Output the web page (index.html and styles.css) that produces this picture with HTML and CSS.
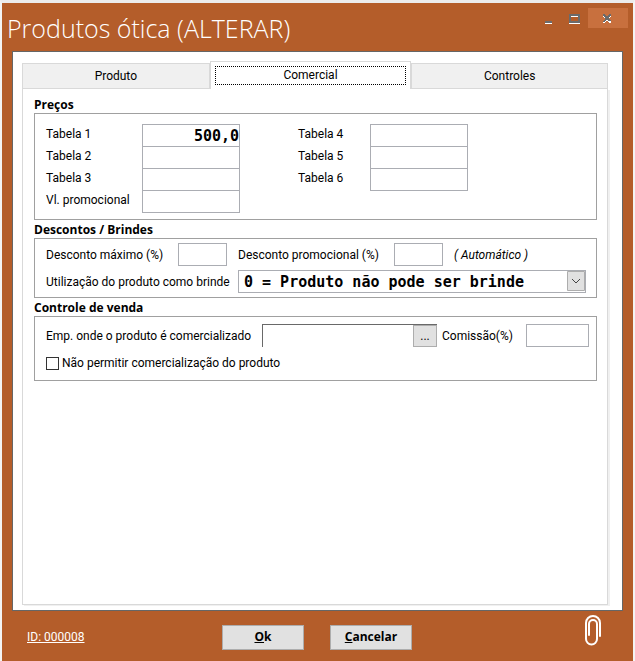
FILE: index.html
```html
<!DOCTYPE html>
<html lang="pt-BR">
<head>
	<meta charset="utf-8">
	<title>Produtos ótica (ALTERAR)</title>
	<meta name="viewport" content="width=device-width, initial-scale=1">
	<link rel="stylesheet" href="styles.css">
</head>
<body>
<form class="window">
	<header class="titlebar">
		<h1>Produtos ótica (ALTERAR)</h1>
		<div class="win_buttons">
			<button type="button" class="win_btn" aria-label="Minimizar">
				<svg width="12" height="12" viewBox="1 -1 12 12" shape-rendering="crispEdges"><path fill="#6b6b6b" d="M3 8h7v2H3z"/><path fill="#fff" d="M3 10h7v1H3z"/></svg>
			</button>
			<button type="button" class="win_btn" aria-label="Maximizar">
				<svg width="12" height="12" viewBox="1 -1 12 12" shape-rendering="crispEdges"><path fill="#6b6b6b" fill-rule="evenodd" d="M1 1h11v9H1zM3 4v4h7V4z"/><path fill="#fff" d="M3 3h7v1H3zM1 10h11v1H1z"/></svg>
			</button>
			<button type="button" class="win_btn win_close" aria-label="Fechar">
				<svg width="12" height="12" viewBox="1 -1 12 12" shape-rendering="crispEdges"><path fill="#fff" d="M2 2h2v1h1v1h2V3h1V2h2v2H9v1H8v2h1v1h1v2H8V9H7V8H5v1H4v1H2V8h1V7h1V5H3V4H2z"/><path fill="#6b6b6b" d="M2 1h2v1h1v1h2V2h1V1h2v2H9v1H8v2h1v1h1v1H8V8H7V7H5v1H4v1H2V8h1V7h1V4H3V3H2z"/></svg>
			</button>
		</div>
	</header>

	<main class="panel">
		<div class="tabs" role="tablist">
			<button type="button" class="tab" role="tab">Produto</button>
			<button type="button" class="tab active" role="tab" aria-selected="true"><span>Comercial</span></button>
			<button type="button" class="tab" role="tab">Controles</button>
		</div>
		<div class="tab_page" role="tabpanel">

			<h2>Preços</h2>
			<section class="group prices">
				<div class="price_col">
					<div class="price_row"><label for="tabela1">Tabela 1</label><input type="text" id="tabela1" class="value" value="500,00"></div>
					<div class="price_row"><label for="tabela2">Tabela 2</label><input type="text" id="tabela2"></div>
					<div class="price_row"><label for="tabela3">Tabela 3</label><input type="text" id="tabela3"></div>
					<div class="price_row"><label for="promocional">Vl. promocional</label><input type="text" id="promocional"></div>
				</div>
				<div class="price_col second">
					<div class="price_row"><label for="tabela4">Tabela 4</label><input type="text" id="tabela4"></div>
					<div class="price_row"><label for="tabela5">Tabela 5</label><input type="text" id="tabela5"></div>
					<div class="price_row"><label for="tabela6">Tabela 6</label><input type="text" id="tabela6"></div>
				</div>
			</section>

			<h2>Descontos / Brindes</h2>
			<section class="group discounts">
				<div class="row">
					<label for="desc_max" class="w_max">Desconto máximo (%)</label>
					<input type="text" id="desc_max" class="percent">
					<label for="desc_promo" class="w_promo">Desconto promocional (%)</label>
					<input type="text" id="desc_promo" class="percent">
					<em>( Automático )</em>
				</div>
				<div class="row">
					<label for="brinde" class="w_gift">Utilização do produto como brinde</label>
					<div class="select_box">
						<select id="brinde">
							<option>0 = Produto não pode ser brinde</option>
						</select>
						<svg class="arrow" width="18" height="20" viewBox="0 0 18 20"><path fill="#e1e1e1" stroke="#adadad" d="M.5.5h17v19H.5z"/><path fill="none" stroke="#444" d="M5 8l4 4 4-4"/></svg>
					</div>
				</div>
			</section>

			<h2>Controle de venda</h2>
			<section class="group sales">
				<div class="row">
					<label for="empresas" class="w_company">Emp. onde o produto é comercializado</label>
					<div class="lookup">
						<input type="text" id="empresas">
						<button type="button" aria-label="Procurar empresas">...</button>
					</div>
					<label for="comissao" class="w_comm">Comissão(%)</label>
					<input type="text" id="comissao" class="commission">
				</div>
				<label class="check"><input type="checkbox">Não permitir comercialização do produto</label>
			</section>
		</div>
	</main>

	<footer class="footer">
		<a href="#" class="record">ID: 000008</a>
		<div class="actions">
			<button type="button"><u>O</u>k</button>
			<button type="button"><u>C</u>ancelar</button>
		</div>
		<button type="button" class="attach" aria-label="Anexos">
			<svg width="18" height="34" viewBox="0 0 18 34"><path fill="none" stroke="#fff" stroke-width="2" stroke-linecap="round" d="M5 21V10a4 4 0 0 1 8 0v15a5 5 0 0 1-11 0V9a7 7 0 0 1 14 0v13"/></svg>
		</button>
	</footer>
</form>
</body>
</html>
```
FILE: styles.css
```css
* {
	box-sizing: border-box;
}

body {
	margin: 0;
	background: #f4f4f4;
	font-family: Roboto, "Open Sans", sans-serif;
	font-size: 12px;
	line-height: 16px;
	color: #000;
}

button, input, select {
	font: inherit;
	color: inherit;
	margin: 0;
	padding: 0;
	border-radius: 0;
}

.window {
	display: flex;
	flex-direction: column;
	min-height: 100vh;
	padding: 0 10px;
	background: #b45d2a;
	border: 2px solid #f4f4f4;
	border-top: 3px solid #ececec;
	border-bottom: 0;
}

/* title bar */
.titlebar {
	display: flex;
	justify-content: space-between;
	height: 48px;
	margin: 0 -5px;
}

.titlebar h1 {
	margin: 0;
	padding-top: 8px;
	font-family: "Open Sans", "Noto Sans", sans-serif;
	font-size: 25px;
	line-height: 34px;
	font-weight: 300;
	color: #fff;
}

.win_buttons {
	display: flex;
	padding-top: 5px;
}

.win_btn {
	width: 26px;
	height: 20px;
	background: none;
	border: 0;
}

.win_btn svg {
	display: block;
	margin: 0 auto;
}

.win_close {
	width: 40px;
	background: #c8703e;
}

/* white area with the tabs */
.panel {
	flex: 1;
	display: flex;
	flex-direction: column;
	padding: 9px 14px 5px 9px;
	background: #fff;
	border: 1px solid #666;
}

.tabs {
	display: grid;
	grid-template-columns: 188fr 202fr 197fr;
	align-items: end;
}

.tab {
	height: 26px;
	background: #f0f0f0;
	border: 1px solid #d9d9d9;
}

.tab.active {
	height: 28px;
	padding: 3px 4px 4px;
	background: #fff;
	border-bottom: 0;
}

.tab.active span {
	display: block;
	line-height: 17px;
	border: 1px dotted #000;
}

.tab_page {
	flex: 1;
	padding: 8px 10px 10px 11px;
	border: 1px solid #d9d9d9;
	border-top: 0;
	box-shadow: 2px 1px 0 #f0f0f0;
}

h2 {
	margin: 0;
	font-family: "Open Sans", "Noto Sans", sans-serif;
	font-size: 12px;
	line-height: 16px;
	font-weight: 700;
}

.group {
	margin-bottom: 2px;
	padding: 0 11px;
	border: 1px solid #a0a0a0;
}

input[type=text] {
	height: 23px;
	background: #fff;
	border: 1px solid #abadb3;
}

/* prices */
.prices {
	display: flex;
	height: 107px;
	padding-top: 10px;
}

.price_row {
	display: flex;
	height: 22px;
}

.price_row label {
	width: 96px;
	line-height: 20px;
}

.second {
	margin-left: 58px;
}

.second label {
	width: 72px;
}

.price_row input {
	width: 98px;
}

.price_row .value {
	padding: 0 0 0 51px;
	font-family: "DejaVu Sans Mono", monospace;
	font-size: 15px;
	font-weight: 700;
}

/* discounts and sales rows */
.row {
	display: flex;
	align-items: center;
	white-space: nowrap;
}

.discounts {
	padding-top: 4px;
	padding-right: 10px;
	padding-bottom: 4px;
}

.discounts .row + .row {
	margin-top: 4px;
}

.w_max {
	width: 132px;
}

.w_promo {
	width: 156px;
	margin-left: 11px;
}

.w_gift {
	width: 192px;
}

.w_company {
	width: 216px;
}

.w_comm {
	width: 84px;
	margin-left: 5px;
}

.percent {
	width: 49px;
}

.discounts em {
	margin-left: 11px;
}

.select_box {
	position: relative;
	flex: 1;
}

.select_box select {
	display: block;
	appearance: none;
	width: 100%;
	height: 23px;
	padding: 0 24px 0 5px;
	background: #fff;
	border: 1px solid #abadb3;
	font-family: "DejaVu Sans Mono", monospace;
	font-size: 15px;
	font-weight: 700;
}

.arrow {
	position: absolute;
	top: 1px;
	right: 1px;
	pointer-events: none;
}

.sales {
	padding: 7px 7px 9px 11px;
}

.lookup {
	display: flex;
	width: 175px;
	height: 23px;
	border-top: 1px solid #696969;
	border-left: 1px solid #696969;
}

.lookup input[type=text] {
	flex: 1;
	min-width: 0;
	height: 22px;
	border: 0;
}

.lookup button {
	width: 24px;
	height: 22px;
	background: #e1e1e1;
	border: 1px solid #adadad;
}

.commission {
	flex: 1;
	min-width: 0;
}

.check {
	display: flex;
	align-items: center;
	margin-top: 8px;
}

.check input {
	appearance: none;
	width: 13px;
	height: 13px;
	margin-right: 3px;
	background: #fff;
	border: 1px solid #333;
}

.check input:checked {
	background: #333;
}

/* footer */
.footer {
	display: grid;
	grid-template-columns: 1fr auto 1fr;
	align-items: center;
	height: 50px;
	padding: 2px 16px 0 15px;
}

.record {
	color: #fff;
}

.actions {
	display: flex;
	gap: 26px;
}

.actions button {
	width: 82px;
	height: 25px;
	background: #e1e1e1;
	border: 1px solid #adadad;
	font-family: "Open Sans", "Noto Sans", sans-serif;
	font-weight: 700;
}

.attach {
	justify-self: end;
	align-self: start;
	padding: 1px 5px 0;
	background: none;
	border: 0;
}

.attach svg {
	display: block;
}
```
